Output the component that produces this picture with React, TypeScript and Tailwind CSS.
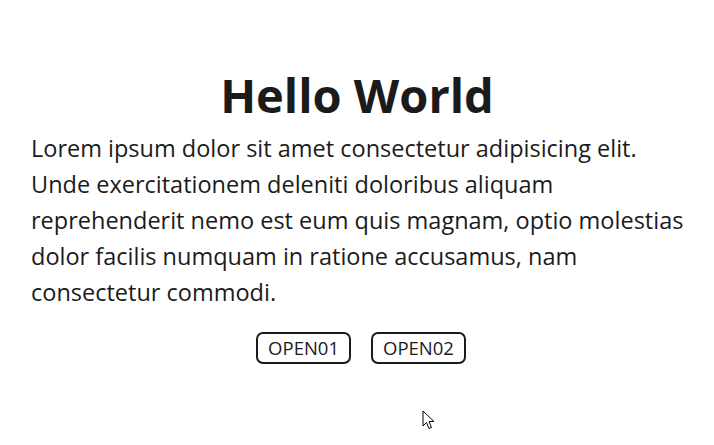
import React from 'react';

const Cursor = () => (
  <svg width="14" height="20" viewBox="0 0 14 20" className="absolute left-[422px] top-[410px]">
    <path d="M1 1 L1 16 L4.5 12.5 L7 18.5 L9.5 17.5 L7 11.5 L12 11.5 Z" fill="#fff" stroke="#000" strokeWidth="1" strokeLinejoin="round" />
  </svg>
);

export default function App() {
  return (
    <div className="relative w-[714px] h-[445px] bg-white text-[#1b1b1b] font-['Open_Sans','Noto_Sans_CJK_KR',sans-serif] overflow-hidden">
      <div className="flex flex-col items-center pt-[64px] px-[31px]">
        <h1 className="text-[47px] leading-[62px] font-bold">Hello World</h1>
        <p className="text-[23.5px] leading-[36px] mt-[4px] self-stretch whitespace-nowrap">
          Lorem ipsum dolor sit amet consectetur adipisicing elit.<br />
          Unde exercitationem deleniti doloribus aliquam<br />
          reprehenderit nemo est eum quis magnam, optio molestias<br />
          dolor facilis numquam in ratione accusamus, nam<br />
          consectetur commodi.
        </p>
        <div className="flex gap-[20px] mt-[22px] ml-[8px]">
          <button className="border-2 border-[#1b1b1b] rounded-[7px] px-[10px] h-[32px] text-[18.5px] leading-none">OPEN01</button>
          <button className="border-2 border-[#1b1b1b] rounded-[7px] px-[10px] h-[32px] text-[18.5px] leading-none">OPEN02</button>
        </div>
      </div>
      <Cursor />
    </div>
  );
}
